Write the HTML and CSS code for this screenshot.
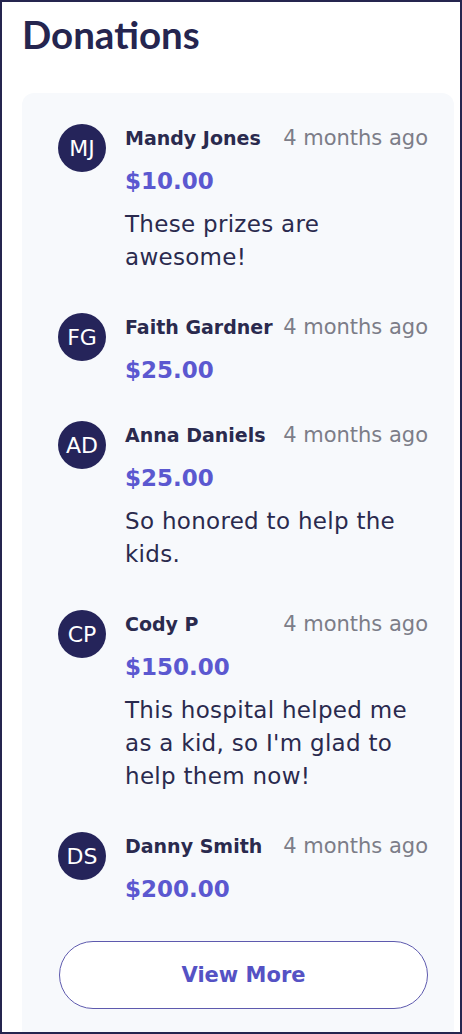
FILE: index.html
```html
<!DOCTYPE html>
<html lang="en">
<head>
  <meta charset="UTF-8" />
  <title>Donations</title>
  <meta name="viewport" content="width=device-width, initial-scale=1" />
  <link rel="stylesheet" href="styles.css">
</head>
<body>
  <div class="frame">
    <h1 class="title">Donations</h1>

    <div class="panel">
      <ul class="donation-list">
        <li class="donation">
          <div class="avatar">MJ</div>
          <div class="donation-body">
            <div class="donation-head">
              <span class="donor">Mandy Jones</span>
              <span class="when">4 months ago</span>
            </div>
            <div class="amount">$10.00</div>
            <p class="message">These prizes are awesome!</p>
          </div>
        </li>
        <li class="donation">
          <div class="avatar">FG</div>
          <div class="donation-body">
            <div class="donation-head">
              <span class="donor">Faith Gardner</span>
              <span class="when">4 months ago</span>
            </div>
            <div class="amount">$25.00</div>
          </div>
        </li>
        <li class="donation">
          <div class="avatar">AD</div>
          <div class="donation-body">
            <div class="donation-head">
              <span class="donor">Anna Daniels</span>
              <span class="when">4 months ago</span>
            </div>
            <div class="amount">$25.00</div>
            <p class="message">So honored to help the kids.</p>
          </div>
        </li>
        <li class="donation">
          <div class="avatar">CP</div>
          <div class="donation-body">
            <div class="donation-head">
              <span class="donor">Cody P</span>
              <span class="when">4 months ago</span>
            </div>
            <div class="amount">$150.00</div>
            <p class="message">This hospital helped me as a kid, so I'm glad to help them now!</p>
          </div>
        </li>
        <li class="donation">
          <div class="avatar">DS</div>
          <div class="donation-body">
            <div class="donation-head">
              <span class="donor">Danny Smith</span>
              <span class="when">4 months ago</span>
            </div>
            <div class="amount">$200.00</div>
          </div>
        </li>
      </ul>

      <button class="view-more" type="button">View More</button>
    </div>
  </div>
</body>
</html>
```

FILE: styles.css
```css
html, body {
  margin: 0; padding: 0;
  font-family: 'DejaVu Sans', 'Noto Sans', Arial, sans-serif;
  background: #fff;
  color: #2a2a4e;
}
.frame {
  box-sizing: border-box;
  height: 100vh;
  border: 2px solid #25254f;
  overflow: hidden;
  background: #fff;
  display: flex;
  flex-direction: column;
}
.title {
  margin: 0;
  padding: 10px 0 0 20px;
  font-family: Lato, 'Noto Sans', sans-serif;
  font-size: 38.5px;
  line-height: 44px;
  font-weight: 700;
  color: #25254f;
}
/* light card holding the list */
.panel {
  flex: 1;
  margin: 37px 6px 0 20px;
  padding: 31px 26px 40px 36px;
  background: #f7f9fc;
  border-radius: 12px 12px 0 0;
}
.donation-list {
  list-style: none;
  margin: 0; padding: 0;
  display: flex;
  flex-direction: column;
  gap: 35px;
}
.donation {
  display: flex;
  align-items: flex-start;
  gap: 19px;
}
.avatar {
  flex: 0 0 48px;
  height: 48px;
  border-radius: 50%;
  background: #25245a;
  color: #fff;
  font-size: 22px;
  display: flex;
  align-items: center;
  justify-content: center;
}
.donation-body { flex: 1; min-width: 0; }
.donation-head {
  display: flex;
  justify-content: space-between;
  align-items: baseline;
  line-height: 28px;
}
.donor {
  font-size: 19px;
  font-weight: 700;
  color: #2a2a4e;
}
.when {
  font-size: 21px;
  color: #7c7d88;
}
.amount {
  margin-top: 13px;
  font-size: 23px;
  line-height: 32px;
  font-weight: 700;
  color: #5b58d0;
}
.message {
  margin: 11px 0 4px 0;
  font-size: 23px;
  line-height: 33px;
  letter-spacing: 0.3px;
  color: #2a2a4e;
}
.view-more {
  display: block;
  box-sizing: border-box;
  width: 369px;
  height: 68px;
  margin: 36px 0 0 1px;
  border: 1px solid #5e5aae;
  border-radius: 34px;
  background: #fff;
  font-family: inherit;
  font-size: 21px;
  font-weight: 700;
  color: #5552c4;
  cursor: pointer;
}
```
